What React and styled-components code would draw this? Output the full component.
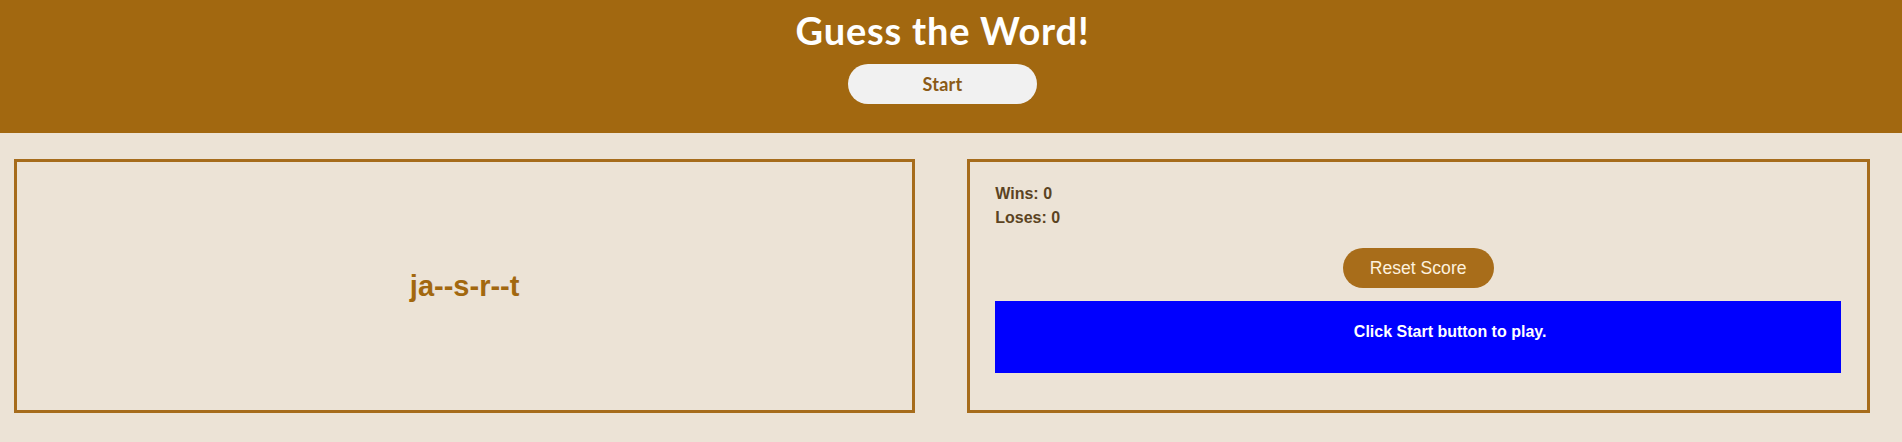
import React, {useState} from 'react'
import styled, {createGlobalStyle} from 'styled-components'

const GlobalStyle = createGlobalStyle`
    body {
        margin: 0;
        background: #ece3d6;
        font-family: "Liberation Sans", Arial, sans-serif;
    }
`

const Header = styled.header`
    display: flex;
    flex-direction: column;
    align-items: center;
    background: #a26810;
    padding: 11px 17px 29px 0;
`

const Title = styled.h1`
    margin: 0;
    color: #ffffff;
    font-family: "Trebuchet MS", Lato, sans-serif;
    font-weight: 700;
    font-size: 38px;
    letter-spacing: 0.8px;
    line-height: 1;
`

const StartButton = styled.button`
    margin-top: 15px;
    width: 189px;
    height: 40px;
    border: none;
    border-radius: 20px;
    background: #f1f1f1;
    color: #8a5a16;
    font-family: "Trebuchet MS", Lato, sans-serif;
    font-weight: 700;
    font-size: 18px;
    letter-spacing: 0.3px;
    cursor: pointer;
`

const Main = styled.main`
    display: flex;
    flex-direction: row;
    gap: 52px;
    padding: 26px 32px 29px 14px;
`

// both panels start from half the row so padding doesn't make one wider
const Panel = styled.section`
    flex: 1 1 50%;
    min-width: 0;
    height: 254px;
    box-sizing: border-box;
    border: 3px solid #a66c1c;
`

const WordPanel = styled(Panel)`
    display: flex;
    justify-content: center;
    align-items: center;
`

const Word = styled.p`
    margin: 0;
    color: #a2680f;
    font-weight: 700;
    font-size: 29px;
`

const ScorePanel = styled(Panel)`
    display: flex;
    flex-direction: column;
    padding: 20px 26px 0 25px;
`

const Stat = styled.div`
    color: #5b4322;
    font-weight: 700;
    font-size: 16px;
    line-height: 24px;
`

const ResetButton = styled.button`
    align-self: center;
    margin-top: 18px;
    width: 151px;
    height: 40px;
    border: none;
    border-radius: 20px;
    background: #a86d1a;
    color: #fdf1de;
    font-family: "Liberation Sans", Arial, sans-serif;
    font-size: 17.6px;
    cursor: pointer;
`

const Message = styled.div`
    margin-top: 13px;
    height: 72px;
    box-sizing: border-box;
    padding: 22px 0 0 64px;
    background: ${props => props.color};
    color: #ffffff;
    font-weight: 700;
    font-size: 16px;
    text-align: center;
`

const App = () => {
    const [score, setScore] = useState({wins: 0, loses: 0})

    return (
        <>
            <GlobalStyle />
            <Header>
                <Title>Guess the Word!</Title>
                <StartButton>Start</StartButton>
            </Header>
            <Main>
                <WordPanel>
                    <Word>ja--s-r--t</Word>
                </WordPanel>
                <ScorePanel>
                    <Stat>Wins: {score.wins}</Stat>
                    <Stat>Loses: {score.loses}</Stat>
                    <ResetButton onClick={() => setScore({wins: 0, loses: 0})}>Reset Score</ResetButton>
                    <Message color="#0000ff">Click Start button to play.</Message>
                </ScorePanel>
            </Main>
        </>
    )
}

export default App
